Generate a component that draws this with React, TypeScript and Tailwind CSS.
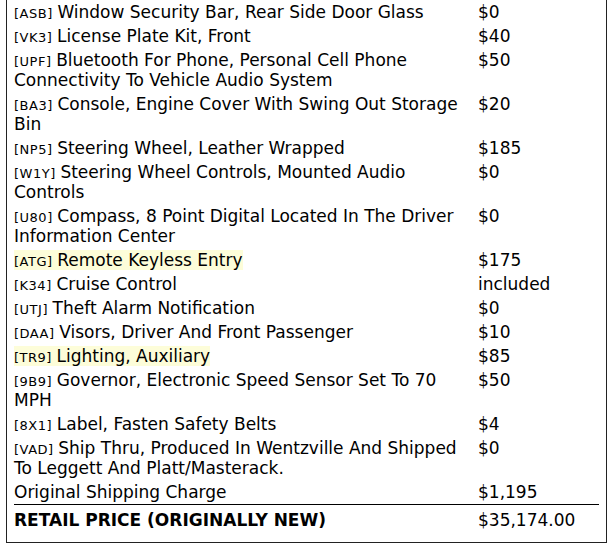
type Option = {
  code?: string;
  label: string;
  price: string;
  highlight?: boolean;
};

const options: Option[] = [
  { code: "ASB", label: "Window Security Bar, Rear Side Door Glass", price: "$0" },
  { code: "VK3", label: "License Plate Kit, Front", price: "$40" },
  {
    code: "UPF",
    label: "Bluetooth For Phone, Personal Cell Phone Connectivity To Vehicle Audio System",
    price: "$50",
  },
  { code: "BA3", label: "Console, Engine Cover With Swing Out Storage Bin", price: "$20" },
  { code: "NP5", label: "Steering Wheel, Leather Wrapped", price: "$185" },
  { code: "W1Y", label: "Steering Wheel Controls, Mounted Audio Controls", price: "$0" },
  {
    code: "U80",
    label: "Compass, 8 Point Digital Located In The Driver Information Center",
    price: "$0",
  },
  { code: "ATG", label: "Remote Keyless Entry", price: "$175", highlight: true },
  { code: "K34", label: "Cruise Control", price: "included" },
  { code: "UTJ", label: "Theft Alarm Notification", price: "$0" },
  { code: "DAA", label: "Visors, Driver And Front Passenger", price: "$10" },
  { code: "TR9", label: "Lighting, Auxiliary", price: "$85", highlight: true },
  {
    code: "9B9",
    label: "Governor, Electronic Speed Sensor Set To 70 MPH",
    price: "$50",
  },
  { code: "8X1", label: "Label, Fasten Safety Belts", price: "$4" },
  {
    code: "VAD",
    label: "Ship Thru, Produced In Wentzville And Shipped To Leggett And Platt/Masterack.",
    price: "$0",
  },
  { label: "Original Shipping Charge", price: "$1,195" },
];

function OptionRow({ option }: { option: Option }) {
  return (
    <>
      <div className="py-[2px] pr-[8px]">
        <span className={option.highlight ? "bg-[#fdfdd9]" : undefined}>
          {option.code && (
            <span className="text-[13px] leading-none tracking-[0.5px]">
              [{option.code}]{" "}
            </span>
          )}
          {option.label}
        </span>
      </div>
      <div className="py-[2px]">{option.price}</div>
    </>
  );
}

export default function App() {
  return (
    <div className="min-h-[550px] bg-white font-['DejaVu_Sans',sans-serif] text-[17px] leading-[20px] text-black">
      <div className="-mt-[3px] ml-[6px] w-[601px] border border-[#222] px-[7px] pb-[12px] pt-[2px]">
        <div className="grid grid-cols-[464px_1fr]">
          {options.map((o, i) => (
            <OptionRow key={i} option={o} />
          ))}
        </div>
        <div className="grid grid-cols-[464px_1fr] border-t border-black pt-[5px]">
          <div className="font-bold">RETAIL PRICE (ORIGINALLY NEW)</div>
          <div>$35,174.00</div>
        </div>
      </div>
    </div>
  );
}
